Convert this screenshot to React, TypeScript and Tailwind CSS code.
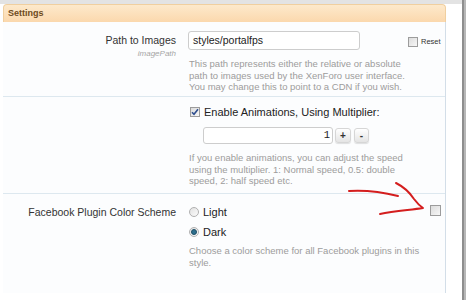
import React from 'react';

const CheckBox = ({ checked = false, className = '' }: { checked?: boolean; className?: string }) => (
  <span
    className={`relative flex items-center justify-center w-[10px] h-[10px] border border-[#9c9c9c] bg-gradient-to-br from-[#dcdcdc] to-[#f7f7f7] shrink-0 ${className}`}
  >
    {checked && (
      <svg width="8" height="8" viewBox="0 0 8 8" className="block">
        <path d="M1 4.2 L3 6.3 L7 1.2" fill="none" stroke="#2f4f8f" strokeWidth="1.6" />
      </svg>
    )}
  </span>
);

const Radio = ({ checked = false }: { checked?: boolean }) => (
  <span className="flex items-center justify-center w-[10px] h-[10px] rounded-full border border-[#b0b0b0] bg-gradient-to-br from-[#e2e2e2] to-[#fbfbfb] shrink-0">
    {checked && <span className="block w-[6px] h-[6px] rounded-full bg-[#2d6f8e] border border-[#1d4e66]" />}
  </span>
);

const Desc = ({ lines }: { lines: string[] }) => (
  <div className="text-[9.5px] leading-[11.5px] text-[#9c9c9c]">
    {lines.map((l) => (
      <div key={l} className="whitespace-nowrap">{l}</div>
    ))}
  </div>
);

export default function App() {
  return (
    <div className="relative w-[466px] h-[300px] overflow-hidden bg-white font-['Liberation_Sans',Arial,sans-serif] flex">
      <div className="w-[462px] flex flex-col">
        <div className="h-[4px] bg-[#e3e3e3] shrink-0" />
        <div className="pl-[3px] w-[446px]">
          {/* header */}
          <div className="h-[18px] rounded-t-[4px] border border-b-0 border-[#f0cf9f] bg-gradient-to-b from-[#fde9cb] to-[#fbd8ad] flex items-center pl-[4px]">
            <span className="text-[9px] font-bold text-[#6e4b1c]">Settings</span>
          </div>

          <div className="border-r border-[#d3dee8] bg-[#fcfdfe]">
            {/* row 1 */}
            <div className="h-[75px] border-b border-[#dde8ef] grid grid-cols-[173px_232px_33px] pt-[9px]">
              <div className="text-right">
                <div className="h-[19px] leading-[19px] text-[10.5px] text-[#333]">Path to Images</div>
                <div className="leading-[8px] text-[8px] italic text-[#a5a5a5]">imagePath</div>
              </div>
              <div className="pl-[13px]">
                <div className="w-[172px] h-[19px] -ml-[1px] border border-[#cdcdcd] rounded-[3px] bg-white flex items-center pl-[4px] text-[10.5px] text-[#222]">
                  styles/portalfps
                </div>
                <div className="mt-[8px]">
                  <Desc
                    lines={[
                      'This path represents either the relative or absolute',
                      'path to images used by the XenForo user interface.',
                      'You may change this to point to a CDN if you wish.',
                    ]}
                  />
                </div>
              </div>
              <div className="flex items-center gap-[3px] h-[19px] mt-[1px]">
                <CheckBox />
                <span className="text-[7.5px] text-[#333]">Reset</span>
              </div>
            </div>

            {/* row 2 */}
            <div className="h-[97px] border-b border-[#dde8ef] grid grid-cols-[173px_232px_33px] pt-[8px]">
              <div />
              <div className="pl-[14px]">
                <div className="h-[14px] flex items-center gap-[4px]">
                  <CheckBox checked />
                  <span className="text-[11px] text-[#222]">Enable Animations, Using Multiplier:</span>
                </div>
                <div className="mt-[8px] ml-[13px] flex items-center gap-[2px]">
                  <div className="w-[130px] h-[17px] border border-[#cdcdcd] rounded-[3px] bg-white flex items-center justify-end pr-[2px] font-['Liberation_Mono',monospace] text-[10.5px] text-[#222]">
                    1
                  </div>
                  <button className="w-[16px] h-[15px] rounded-[3px] border border-[#d6d6d6] bg-gradient-to-b from-white to-[#e4e4e4] shadow-[0_1px_1px_rgba(0,0,0,0.12)] flex items-center justify-center text-[10px] font-bold leading-none text-[#333]">
                    +
                  </button>
                  <button className="w-[15px] h-[15px] ml-[1px] rounded-[3px] border border-[#d6d6d6] bg-gradient-to-b from-white to-[#e4e4e4] shadow-[0_1px_1px_rgba(0,0,0,0.12)] flex items-center justify-center text-[10px] font-bold leading-none text-[#333]">
                    -
                  </button>
                </div>
                <div className="mt-[8px] -ml-[1px]">
                  <Desc
                    lines={[
                      'If you enable animations, you can adjust the speed',
                      'using the multiplier. 1: Normal speed, 0.5: double',
                      'speed, 2: half speed etc.',
                    ]}
                  />
                </div>
              </div>
              <div />
            </div>

            {/* row 3 */}
            <div className="h-[99px] grid grid-cols-[173px_254px_11px] pt-[11px]">
              <div className="text-right h-[14px] leading-[14px] text-[10.5px] text-[#333]">Facebook Plugin Color Scheme</div>
              <div className="pl-[13px]">
                <div className="h-[14px] flex items-center gap-[4px]">
                  <Radio />
                  <span className="text-[11px] text-[#222]">Light</span>
                </div>
                <div className="mt-[6px] h-[14px] flex items-center gap-[4px]">
                  <Radio checked />
                  <span className="text-[11px] text-[#222]">Dark</span>
                </div>
                <div className="mt-[6px]">
                  <Desc lines={['Choose a color scheme for all Facebook plugins in this', 'style.']} />
                </div>
              </div>
              <div>
                <CheckBox className="w-[11px] h-[11px]" />
              </div>
            </div>
          </div>
        </div>
      </div>
      <div className="w-[4px] h-full bg-[#b7b7b7] border-l-2 border-[#8e8e8e]" />

      {/* red annotation arrow */}
      <svg className="absolute left-0 top-0 pointer-events-none" width="466" height="300" viewBox="0 0 466 300">
        <path d="M349 191 C365 190 382 192 398 196" fill="none" stroke="#d41e1e" strokeWidth="2" strokeLinecap="round" />
        <path
          d="M396 183 C404 187 410 193 414 199 C417 203 420 206 423 208 C410 210 394 211 380 214"
          fill="none"
          stroke="#d41e1e"
          strokeWidth="2"
          strokeLinecap="round"
          strokeLinejoin="round"
        />
      </svg>
    </div>
  );
}
